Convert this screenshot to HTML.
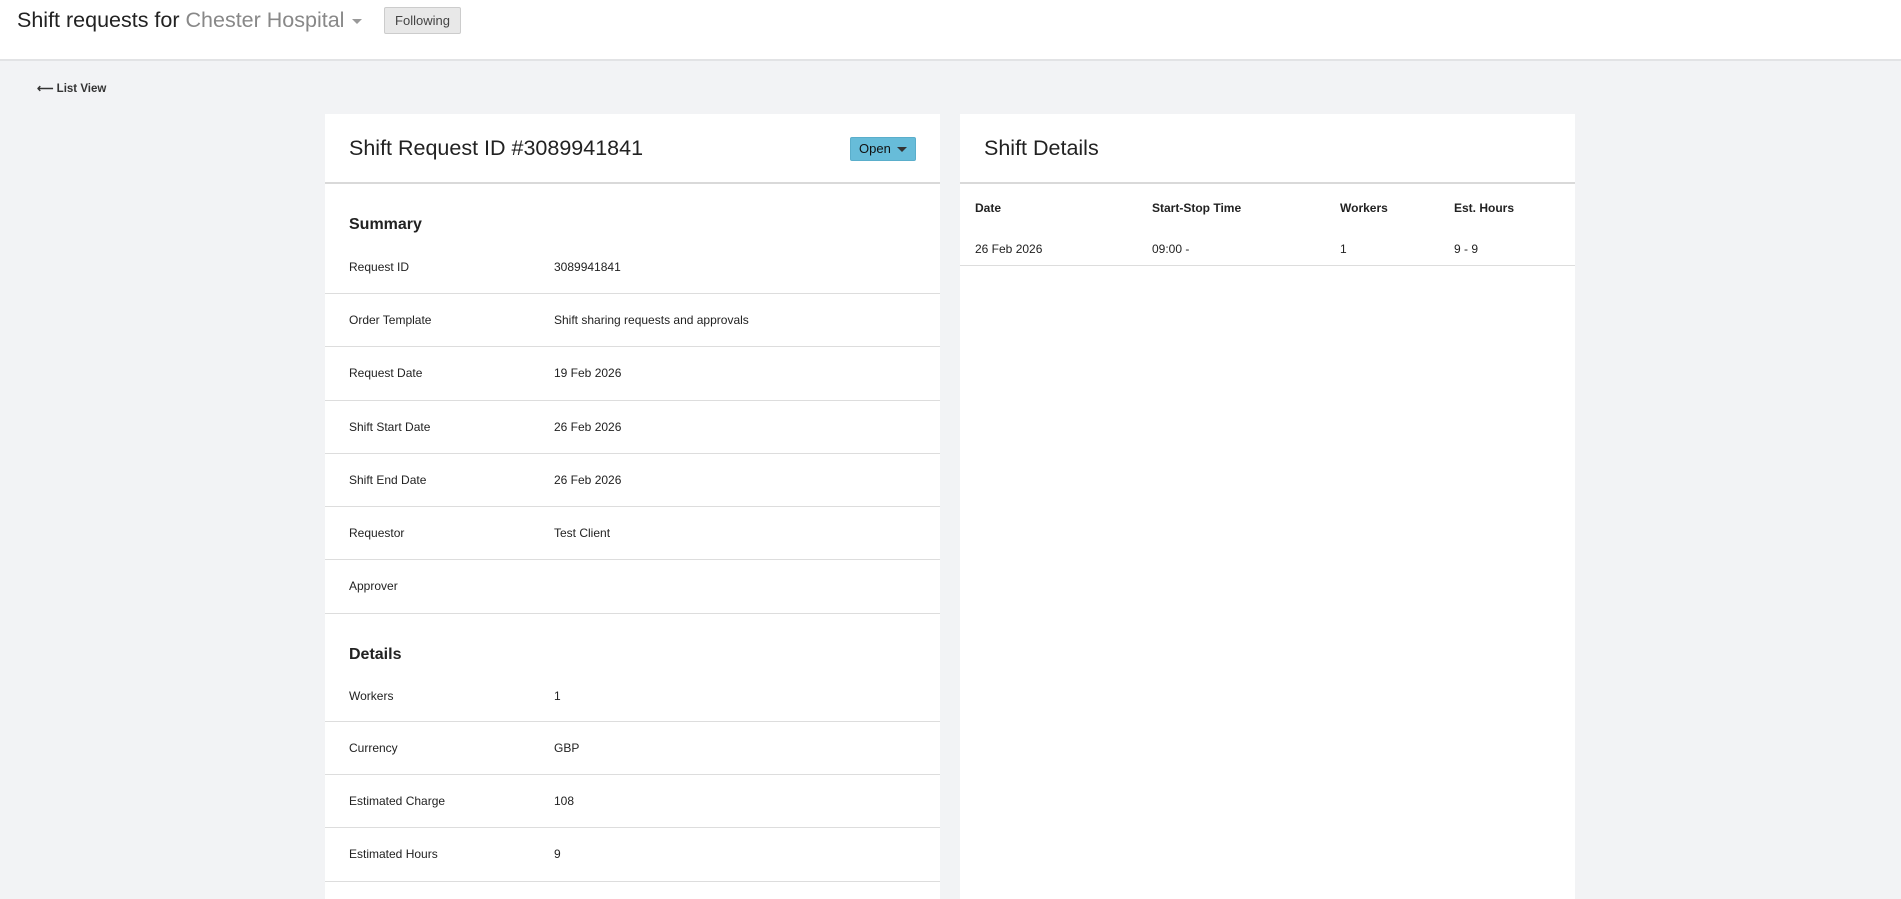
<!DOCTYPE html>
<html><head><style>
*{margin:0;padding:0;box-sizing:border-box}
body{width:1901px;height:899px;overflow:hidden;background:#f2f3f5;font-family:"Liberation Sans",Arial,sans-serif;color:#222;position:relative}
.hdr{position:absolute;left:0;top:0;width:1901px;height:61px;background:#fff;border-bottom:2px solid #e2e3e5}
.t{position:absolute;left:17px;top:8px;font-size:21.5px;color:#222}
.t span{color:#888}
.caret{display:inline-block;width:0;height:0;border-left:5px solid transparent;border-right:5px solid transparent;border-top:5px solid #999;vertical-align:middle;margin-left:8px}
.fol{position:absolute;left:384px;top:7px;width:77px;height:27px;border:1px solid #ccc;background:#e8e8e8;border-radius:2px;font-size:13px;color:#444;text-align:center;line-height:25px}
.lv{position:absolute;left:37px;top:81px;font-size:11.5px;font-weight:bold;color:#333}
.card{position:absolute;top:114px;bottom:0;background:#fff}
.ch{height:70px;border-bottom:2px solid #d9d9d9;position:relative}
.ch h1{position:absolute;left:24px;top:22px;font-size:21.5px;font-weight:normal;color:#222}
.open{position:absolute;left:525px;top:23px;width:66px;height:24px;background:#67bcd9;border:1px solid #5aaecb;border-radius:2px;font-size:13px;color:#111;line-height:22px;padding-left:8px}
.open .caret{border-top-color:#333;margin-left:6px}
.sec{font-size:16px;font-weight:bold;padding:32px 24px 0;height:62px}
.row{height:53.3px;border-bottom:1px solid #ddd;position:relative;font-size:12px}
.row div{position:absolute;top:19px}
.row .l{left:24px}.row .v{left:229px}
</style></head><body>
<div class="hdr"><div class="t">Shift requests for <span>Chester Hospital</span><i class="caret"></i></div><div class="fol">Following</div></div>
<div class="lv">⟵ List View</div>
<div class="card" style="left:325px;width:615px">
<div class="ch"><h1>Shift Request ID #3089941841</h1><div class="open">Open<i class="caret"></i></div></div>
<div class="sec">Summary</div>
<div class="row" style="height:48px"><div class="l" style="top:14px">Request ID</div><div class="v" style="top:14px">3089941841</div></div>
<div class="row"><div class="l">Order Template</div><div class="v">Shift sharing requests and approvals</div></div>
<div class="row"><div class="l">Request Date</div><div class="v">19 Feb 2026</div></div>
<div class="row"><div class="l">Shift Start Date</div><div class="v">26 Feb 2026</div></div>
<div class="row"><div class="l">Shift End Date</div><div class="v">26 Feb 2026</div></div>
<div class="row"><div class="l">Requestor</div><div class="v">Test Client</div></div>
<div class="row"><div class="l">Approver</div><div class="v"></div></div>
<div class="sec">Details</div>
<div class="row" style="height:46px"><div class="l" style="top:13px">Workers</div><div class="v" style="top:13px">1</div></div>
<div class="row"><div class="l">Currency</div><div class="v">GBP</div></div>
<div class="row"><div class="l">Estimated Charge</div><div class="v">108</div></div>
<div class="row"><div class="l">Estimated Hours</div><div class="v">9</div></div>
</div>
<div class="card" style="left:960px;width:615px">
<div class="ch"><h1>Shift Details</h1></div>
<div style="position:relative;height:82px;border-bottom:1px solid #ddd;font-size:12px">
<b style="position:absolute;left:15px;top:17px">Date</b><b style="position:absolute;left:192px;top:17px">Start-Stop Time</b><b style="position:absolute;left:380px;top:17px">Workers</b><b style="position:absolute;left:494px;top:17px">Est. Hours</b>
<span style="position:absolute;left:15px;top:58px">26 Feb 2026</span><span style="position:absolute;left:192px;top:58px">09:00 -</span><span style="position:absolute;left:380px;top:58px">1</span><span style="position:absolute;left:494px;top:58px">9 - 9</span>
</div>
</div>
</body></html>
